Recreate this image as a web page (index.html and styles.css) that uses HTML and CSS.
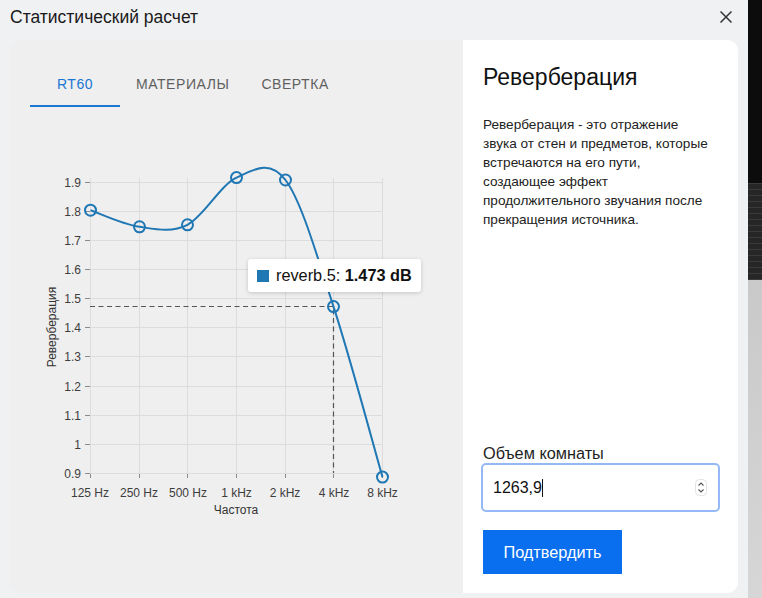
FILE: index.html
```html
<!DOCTYPE html>
<html lang="ru">
<head>
<meta charset="utf-8">
<title>Статистический расчет</title>
<link rel="stylesheet" href="styles.css">
</head>
<body>
<div class="screen">
  <div class="dialog">
    <div class="header">
      <div class="title">Статистический расчет</div>
      <button class="close" aria-label="Закрыть">
        <svg width="12" height="12" viewBox="0 0 12 12"><path d="M0.5 0.5 L11.5 11.5 M11.5 0.5 L0.5 11.5" stroke="#333" stroke-width="1.5" fill="none"/></svg>
      </button>
    </div>
    <div class="content">
      <div class="left">
        <div class="tabs">
          <div class="tab active">RT60</div>
          <div class="tab">Материалы</div>
          <div class="tab">Свертка</div>
        </div>
        <div class="chart">
          <svg class="plot" width="453" height="486" viewBox="0 0 453 486">
            <g transform="translate(-10 -107)">
              <g class="grid">
                <path d="M90 182.5H382.5M90 211.5H382.5M90 240.5H382.5M90 269.5H382.5M90 298.5H382.5M90 327.5H382.5M90 356.5H382.5M90 386.5H382.5M90 415.5H382.5M90 444.5H382.5M90 473.5H382.5"/>
                <path d="M90.5 178V473M139.5 178V473M187.5 178V473M236.5 178V473M285.5 178V473M333.5 178V473M382.5 178V473"/>
              </g>
              <g class="ticks">
                <path d="M85 182.5H90M85 211.5H90M85 240.5H90M85 269.5H90M85 298.5H90M85 327.5H90M85 356.5H90M85 386.5H90M85 415.5H90M85 444.5H90M85 473.5H90"/>
                <path d="M90.5 474V478M139.5 474V478M187.5 474V478M236.5 474V478M285.5 474V478M333.5 474V478M382.5 474V478"/>
              </g>
              <g class="ylabels">
                <text x="81" y="186.5">1.9</text>
                <text x="81" y="215.5">1.8</text>
                <text x="81" y="244.5">1.7</text>
                <text x="81" y="273.5">1.6</text>
                <text x="81" y="302.5">1.5</text>
                <text x="81" y="331.5">1.4</text>
                <text x="81" y="360.5">1.3</text>
                <text x="81" y="390.5">1.2</text>
                <text x="81" y="419.5">1.1</text>
                <text x="81" y="448.5">1</text>
                <text x="81" y="477.5">0.9</text>
              </g>
              <g class="xlabels">
                <text x="90" y="497">125 Hz</text>
                <text x="139" y="497">250 Hz</text>
                <text x="188" y="497">500 Hz</text>
                <text x="236.5" y="497">1 kHz</text>
                <text x="285" y="497">2 kHz</text>
                <text x="334" y="497">4 kHz</text>
                <text x="382.5" y="497">8 kHz</text>
              </g>
              <text class="axis-title" x="236" y="514">Частота</text>
              <text class="axis-title" transform="translate(55.5 327) rotate(-90)">Реверберация</text>
              <path class="cross" d="M90 306.5H333.5V473"/>
              <path class="line" d="M90.5 210.2C98.7 213 123 224.4 139.5 226.8C155.7 229.2 171.3 233 187.5 224.8C203.7 216.6 220.2 185.1 236.5 177.6C252.8 170.1 269.3 158.5 285.5 180C301.7 201.5 317.3 257.1 333.5 306.6C349.7 356.1 374.3 448.7 382.5 477.1"/>
              <g class="markers">
                <circle cx="90.5" cy="210.2" r="5.5"/>
                <circle cx="139.5" cy="226.8" r="5.5"/>
                <circle cx="187.5" cy="224.8" r="5.5"/>
                <circle cx="236.5" cy="177.6" r="5.5"/>
                <circle cx="285.5" cy="180" r="5.5"/>
                <circle cx="333.5" cy="306.6" r="5.5"/>
                <circle cx="382.5" cy="477.1" r="5.5"/>
              </g>
            </g>
          </svg>
          <div class="tooltip">
            <span class="swatch"></span>
            <span class="tip-text">reverb.5: <b>1.473 dB</b></span>
          </div>
        </div>
      </div>
      <div class="right">
        <h2 class="heading">Реверберация</h2>
        <p class="desc">Реверберация - это отражение<br>звука от стен и предметов, которые<br>встречаются на его пути,<br>создающее эффект<br>продолжительного звучания после<br>прекращения источника.</p>
        <div class="volume">
          <label class="vol-label" for="vol">Объем комнаты</label>
          <div class="field">
            <input id="vol" class="vol-input" type="text" value="1263,9">
            <span class="caret"></span>
            <svg class="spinner" width="12" height="17" viewBox="0 0 12 17">
              <rect x="0.5" y="0.5" width="11" height="16" rx="4" fill="#fff" stroke="#e2e2e2"/>
              <path d="M3.5 6.5L6 4L8.5 6.5M3.5 10.5L6 13L8.5 10.5" stroke="#555" stroke-width="1.1" fill="none"/>
            </svg>
          </div>
          <button class="submit">Подтвердить</button>
        </div>
      </div>
    </div>
  </div>
  <div class="backdrop">
    <div class="bd-black"></div>
    <div class="bd-grid"></div>
    <div class="bd-light"></div>
  </div>
</div>
</body>
</html>
```

FILE: styles.css
```css
* { box-sizing: border-box; }
html, body { margin: 0; padding: 0; }
body {
  width: 762px;
  height: 598px;
  overflow: hidden;
  font-family: "Liberation Sans", Arial, sans-serif;
  color: #1a1a1a;
}
.screen {
  display: flex;
  width: 762px;
  height: 598px;
}
.dialog {
  width: 748px;
  height: 598px;
  background: #f0f1f3;
  padding: 0 10px;
  display: flex;
  flex-direction: column;
}
.header {
  height: 40px;
  display: flex;
  justify-content: space-between;
  align-items: flex-start;
}
.title {
  font-size: 17.5px;
  line-height: 20px;
  padding-top: 7px;
  color: #1a1a1a;
}
.close {
  border: 0;
  background: none;
  padding: 0;
  margin: 11px 6px 0 0;
  width: 12px;
  height: 12px;
  display: block;
}
.close svg { display: block; }
.content {
  display: flex;
  height: 553px;
  border-radius: 11px;
  overflow: hidden;
}
.left {
  width: 453px;
  background: #efefef;
  display: flex;
  flex-direction: column;
}
.tabs {
  display: flex;
  margin: 19px 0 0 20px;
  height: 48px;
}
.tab {
  min-width: 90px;
  height: 48px;
  padding: 2px 16px 0;
  display: flex;
  align-items: center;
  justify-content: center;
  font-size: 14px;
  letter-spacing: 0.55px;
  text-transform: uppercase;
  color: #5f5f5f;
}
.tab.active {
  color: #1976d2;
  box-shadow: inset 0 -2px 0 #1976d2;
}
.chart {
  position: relative;
  width: 453px;
  height: 486px;
}
.plot { display: block; }
.grid path { stroke: #dcdcdc; stroke-width: 1; fill: none; }
.ticks path { stroke: #8a8a8a; stroke-width: 1; fill: none; }
.ylabels text {
  font-family: "Liberation Sans", Arial, sans-serif;
  font-size: 12px;
  fill: #3d3d3d;
  text-anchor: end;
}
.xlabels text {
  font-family: "Liberation Sans", Arial, sans-serif;
  font-size: 12px;
  fill: #3d3d3d;
  text-anchor: middle;
}
.axis-title {
  font-family: "Liberation Sans", Arial, sans-serif;
  font-size: 12px;
  fill: #333;
  text-anchor: middle;
}
.cross {
  stroke: #555;
  stroke-width: 1.2;
  stroke-dasharray: 5 3.5;
  fill: none;
}
.line {
  stroke: #1f77b4;
  stroke-width: 2;
  fill: none;
}
.markers circle {
  stroke: #1f77b4;
  stroke-width: 2;
  fill: none;
}
.tooltip {
  position: absolute;
  left: 238px;
  top: 152px;
  height: 33px;
  padding: 0 9px;
  display: flex;
  align-items: center;
  background: #fff;
  border-radius: 3px;
  box-shadow: 0 1px 4px rgba(0, 0, 0, 0.18);
  white-space: nowrap;
}
.swatch {
  width: 12px;
  height: 12px;
  background: #1f77b4;
  margin-right: 7px;
}
.tip-text {
  font-size: 16.3px;
  color: #111;
}
.tip-text b { font-weight: 700; }
.right {
  width: 275px;
  background: #fff;
  padding: 24px 20px 19px 20px;
  display: flex;
  flex-direction: column;
}
.heading {
  margin: 0;
  font-size: 23px;
  line-height: 26px;
  font-weight: 400;
  color: #111;
}
.desc {
  margin: 25px 0 0;
  font-size: 13.6px;
  line-height: 19px;
  color: #222;
  white-space: nowrap;
}
.volume {
  margin-top: auto;
  display: flex;
  flex-direction: column;
  align-items: flex-start;
}
.vol-label {
  font-size: 16.3px;
  line-height: 19px;
  color: #1e1e1e;
}
.field {
  position: relative;
  margin: 0 0 0 -2px;
  width: 239px;
  height: 49px;
}
.vol-input {
  width: 239px;
  height: 49px;
  border: 2px solid #94b9f6;
  border-radius: 5px;
  padding: 0 0 0 10px;
  font-family: "Liberation Sans", Arial, sans-serif;
  font-size: 16px;
  color: #111;
  background: #fff;
  outline: none;
}
.caret {
  position: absolute;
  left: 61px;
  top: 16px;
  width: 1px;
  height: 18px;
  background: #111;
}
.spinner {
  position: absolute;
  left: 214px;
  top: 16px;
}
.submit {
  margin-top: 18px;
  width: 139px;
  height: 44px;
  border: 0;
  border-radius: 0;
  background: #0a6fef;
  color: #fff;
  font-family: "Liberation Sans", Arial, sans-serif;
  font-size: 16.3px;
}
.backdrop {
  width: 14px;
  display: flex;
  flex-direction: column;
}
.bd-black { height: 183px; background: #0c0c0c; }
.bd-grid {
  height: 97px;
  background:
    repeating-linear-gradient(0deg, #3a3a3a 0 1px, transparent 1px 6px),
    #262626;
}
.bd-light {
  flex: 1;
  background: linear-gradient(180deg, #c9c9c9, #d6d6d6);
}
```
